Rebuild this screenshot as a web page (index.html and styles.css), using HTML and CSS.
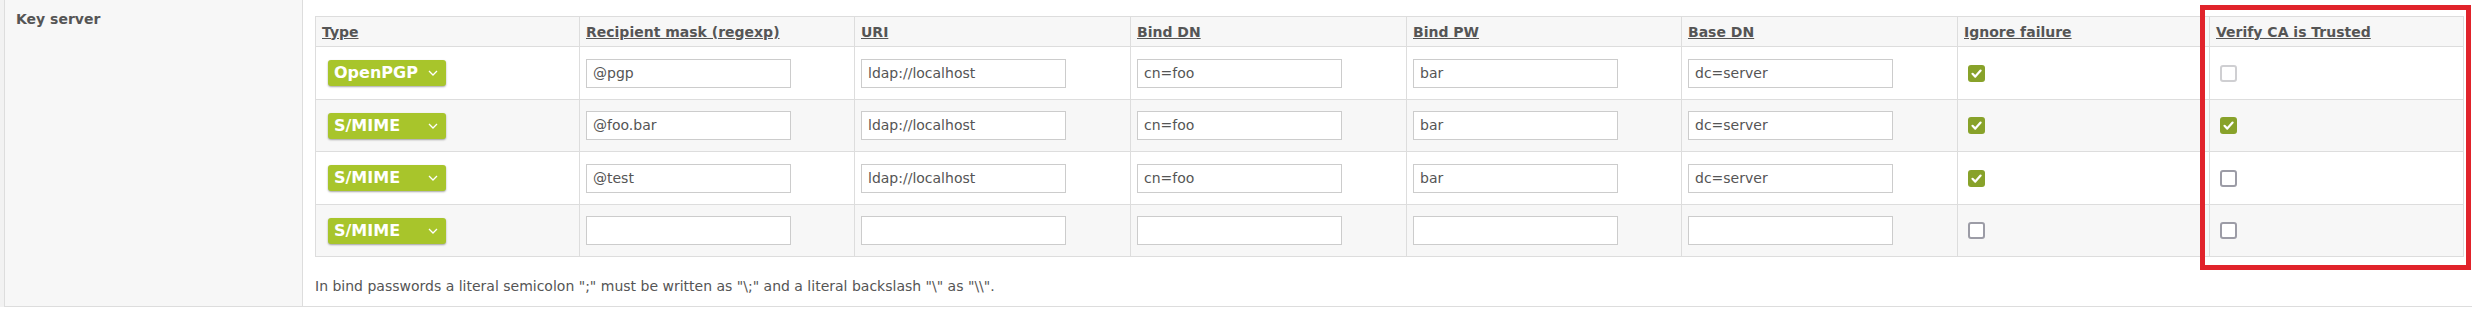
FILE: index.html
```html
<!DOCTYPE html>
<html>
<head>
<meta charset="utf-8">
<title>Key server</title>
<link rel="stylesheet" href="styles.css">
</head>
<body>
<div class="frame">
  <div class="setting">
    <div class="label">Key server</div>
    <div class="content">
      <table class="grid">
        <colgroup>
          <col class="c-type"><col class="c-mask"><col class="c-uri"><col class="c-dn"><col class="c-pw"><col class="c-base"><col class="c-ign"><col class="c-ver">
        </colgroup>
        <thead>
          <tr>
            <th><span class="sort">Type</span></th>
            <th><span class="sort">Recipient mask (regexp)</span></th>
            <th><span class="sort">URI</span></th>
            <th><span class="sort">Bind DN</span></th>
            <th><span class="sort">Bind PW</span></th>
            <th><span class="sort">Base DN</span></th>
            <th><span class="sort">Ignore failure</span></th>
            <th><span class="sort">Verify CA is Trusted</span></th>
          </tr>
        </thead>
        <tbody>
          <tr class="r-odd">
            <td><span class="select"><span>OpenPGP</span><svg class="chev" width="10" height="6" viewBox="0 0 10 6"><polyline points="1,1 5,5 9,1" fill="none" stroke="#fff" stroke-width="1.3"/></svg></span></td>
            <td><span class="field">@pgp</span></td>
            <td><span class="field">ldap://localhost</span></td>
            <td><span class="field">cn=foo</span></td>
            <td><span class="field">bar</span></td>
            <td><span class="field">dc=server</span></td>
            <td><span class="check on"><svg width="17" height="17" viewBox="0 0 17 17"><polyline points="4.5,8.8 7.3,11.6 12.6,5.6" fill="none" stroke="#fff" stroke-width="2.2" stroke-linecap="round" stroke-linejoin="round"/></svg></span></td>
            <td><span class="check off light"></span></td>
          </tr>
          <tr class="r-even">
            <td><span class="select"><span>S/MIME</span><svg class="chev" width="10" height="6" viewBox="0 0 10 6"><polyline points="1,1 5,5 9,1" fill="none" stroke="#fff" stroke-width="1.3"/></svg></span></td>
            <td><span class="field">@foo.bar</span></td>
            <td><span class="field">ldap://localhost</span></td>
            <td><span class="field">cn=foo</span></td>
            <td><span class="field">bar</span></td>
            <td><span class="field">dc=server</span></td>
            <td><span class="check on"><svg width="17" height="17" viewBox="0 0 17 17"><polyline points="4.5,8.8 7.3,11.6 12.6,5.6" fill="none" stroke="#fff" stroke-width="2.2" stroke-linecap="round" stroke-linejoin="round"/></svg></span></td>
            <td><span class="check on"><svg width="17" height="17" viewBox="0 0 17 17"><polyline points="4.5,8.8 7.3,11.6 12.6,5.6" fill="none" stroke="#fff" stroke-width="2.2" stroke-linecap="round" stroke-linejoin="round"/></svg></span></td>
          </tr>
          <tr class="r-odd">
            <td><span class="select"><span>S/MIME</span><svg class="chev" width="10" height="6" viewBox="0 0 10 6"><polyline points="1,1 5,5 9,1" fill="none" stroke="#fff" stroke-width="1.3"/></svg></span></td>
            <td><span class="field">@test</span></td>
            <td><span class="field">ldap://localhost</span></td>
            <td><span class="field">cn=foo</span></td>
            <td><span class="field">bar</span></td>
            <td><span class="field">dc=server</span></td>
            <td><span class="check on"><svg width="17" height="17" viewBox="0 0 17 17"><polyline points="4.5,8.8 7.3,11.6 12.6,5.6" fill="none" stroke="#fff" stroke-width="2.2" stroke-linecap="round" stroke-linejoin="round"/></svg></span></td>
            <td><span class="check off"></span></td>
          </tr>
          <tr class="r-even">
            <td><span class="select"><span>S/MIME</span><svg class="chev" width="10" height="6" viewBox="0 0 10 6"><polyline points="1,1 5,5 9,1" fill="none" stroke="#fff" stroke-width="1.3"/></svg></span></td>
            <td><span class="field"></span></td>
            <td><span class="field"></span></td>
            <td><span class="field"></span></td>
            <td><span class="field"></span></td>
            <td><span class="field"></span></td>
            <td><span class="check off"></span></td>
            <td><span class="check off"></span></td>
          </tr>
        </tbody>
      </table>
      <p class="hint">In bind passwords a literal semicolon ";" must be written as "\;" and a literal backslash "\" as "\\".</p>
    </div>
  </div>
</div>
<div class="highlight"></div>
</body>
</html>
```

FILE: styles.css
```css
* { box-sizing: border-box; }
html, body { margin: 0; padding: 0; background: #fff; }
body {
  font-family: "DejaVu Sans", Verdana, sans-serif;
  font-size: 14px;
  color: #555;
}
.frame { padding-left: 4px; background: #f2f2f2; }
.setting {
  display: flex;
  height: 307px;
  border-bottom: 1px solid #ddd;
  background: #fff;
}
.label {
  width: 299px;
  flex: none;
  background: #f7f7f7;
  border-left: 1px solid #ddd;
  border-right: 1px solid #ddd;
  padding: 11px 0 0 11px;
  font-weight: bold;
  line-height: 17px;
}
.content {
  flex: 1;
  padding: 16px 9px 0 12px;
  min-width: 0;
}
.grid {
  width: 100%;
  table-layout: fixed;
  border-collapse: collapse;
}
.c-type { width: 264px; }
.c-mask { width: 275px; }
.c-uri { width: 276px; }
.c-dn { width: 276px; }
.c-pw { width: 275px; }
.c-base { width: 276px; }
.c-ign { width: 252px; }
.c-ver { width: 254px; }
.grid th, .grid td {
  border: 1px solid #ddd;
  padding: 0 6px;
  text-align: left;
  vertical-align: middle;
}
.grid th {
  height: 30px;
  background: #f7f7f7;
  font-weight: bold;
}
.sort { text-decoration: underline; }
.r-odd td { background: #fff; height: 53px; }
.r-even td { background: #f7f7f7; height: 52px; }
.select {
  display: flex;
  align-items: center;
  justify-content: space-between;
  width: 118px;
  height: 26px;
  margin-left: 6px;
  padding: 0 6px;
  background: #a8c52b;
  border-radius: 3px;
  box-shadow: 0 1px 2px rgba(0, 0, 0, 0.35);
  color: #fff;
  font-weight: bold;
  font-size: 16px;
  line-height: 26px;
}
.chev { display: block; margin-right: 2px; }
.field {
  display: block;
  width: 205px;
  height: 29px;
  border: 1px solid #ccc;
  background: #fff;
  padding: 0 6px;
  line-height: 27px;
  color: #555;
}
.check {
  display: block;
  width: 17px;
  height: 17px;
  margin-left: 4px;
  border-radius: 3px;
}
.check svg { display: block; }
.check.on { background: #88a22a; }
.check.off { background: #fff; border: 2px solid #9c9ca6; }
.check.off.light { border-color: #cfcfd2; }
.hint { margin: 21px 0 0; line-height: 17px; }
.highlight {
  position: absolute;
  left: 2200px;
  top: 5px;
  width: 271px;
  height: 265px;
  border: 5px solid #e1232b;
}
```
